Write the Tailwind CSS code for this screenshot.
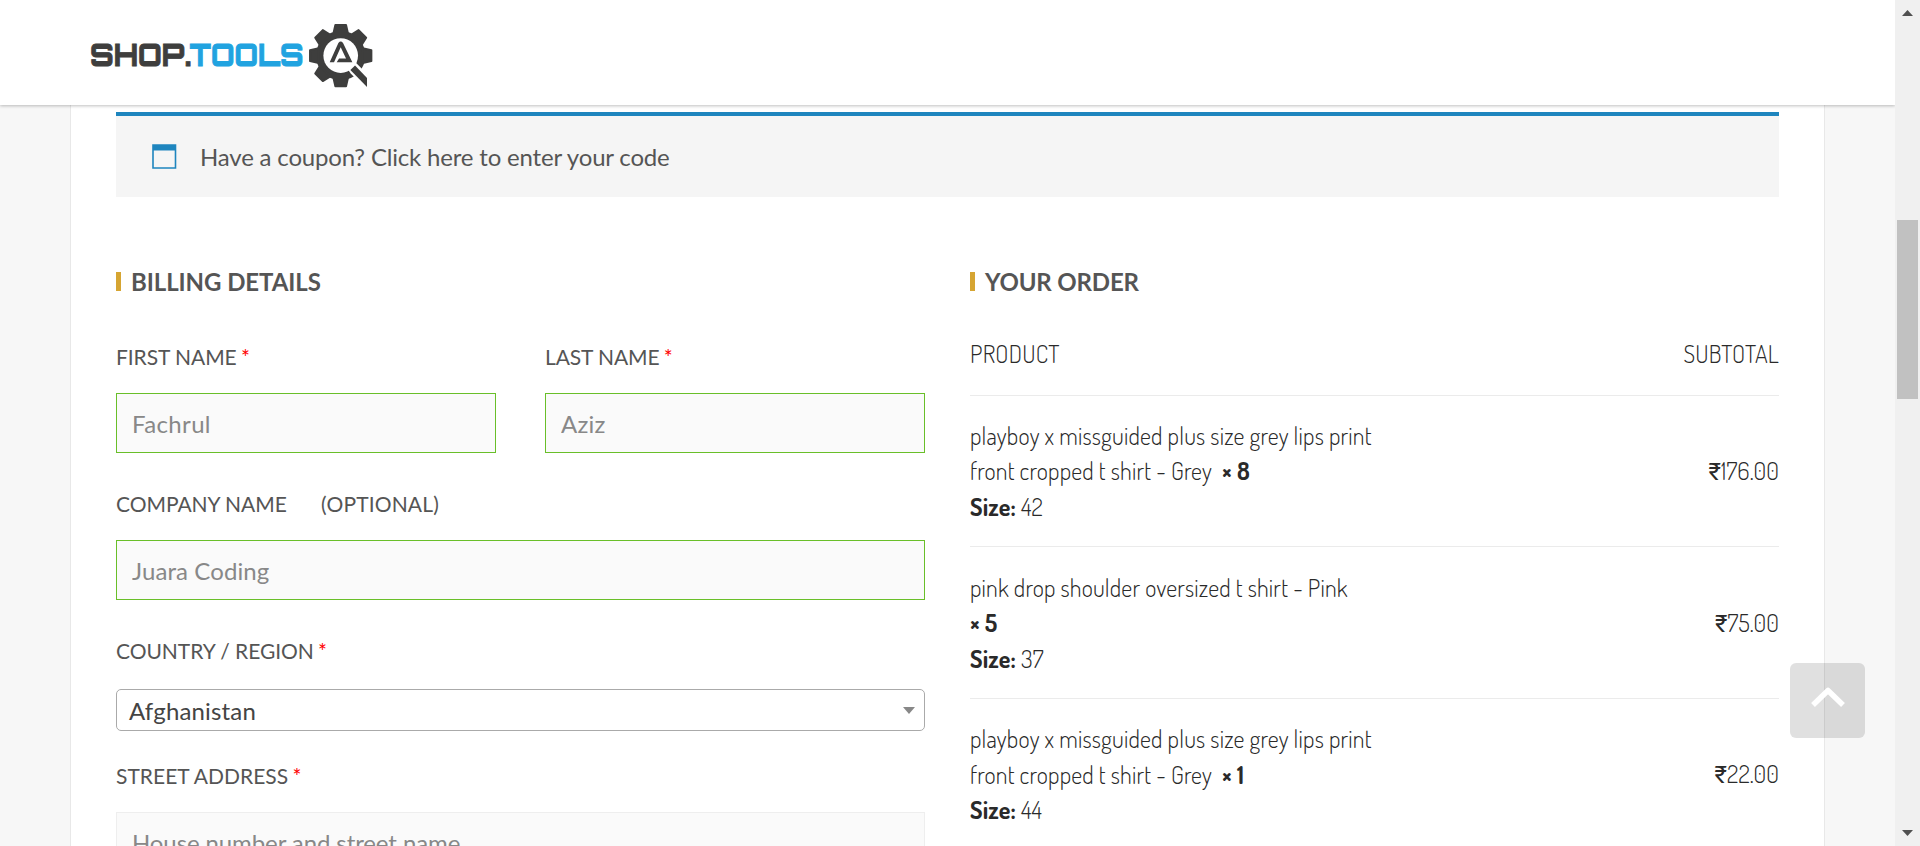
<!DOCTYPE html>
<html lang="en">
<head>
<meta charset="utf-8">
<title>Checkout – Shop Tools</title>
<script src="https://cdn.jsdelivr.net/npm/@tailwindcss/browser@4"></script>
</head>
<body class="relative flex h-[846px] w-[1920px] overflow-hidden bg-[#f7f7f7] font-['Lato',sans-serif] text-[24px] leading-[36px] text-[#555]">
<div class="flex h-full w-[1895px] flex-col">
  <header class="relative z-10 flex h-[105px] shrink-0 items-start bg-white pl-[90px] shadow-[0_1px_3px_rgba(0,0,0,0.25)]">
    <svg class="mt-[22px] block" width="284" height="68" viewBox="90 22 284 68" role="img" aria-label="Shop.Tools">
      <g font-family="Orbitron, Inter, sans-serif" font-weight="800" font-size="31.5" stroke-width=".8">
        <text x="90" y="65.700" textLength="101" lengthAdjust="spacingAndGlyphs" fill="#3e3e3d" stroke="#3e3e3d">SHOP.</text>
        <text x="189.500" y="65.700" textLength="114" lengthAdjust="spacingAndGlyphs" fill="#21a3e0" stroke="#21a3e0">TOOLS</text>
      </g>
      <g transform="translate(340.7 55.6) scale(.3333)">
        <g fill="#3e3e3d" stroke="#3e3e3d" stroke-width="6" stroke-linejoin="round">
          <circle r="71"/>
          <path id="tooth" d="M-22-66L-16-92H16L22-66Z"/>
          <use href="#tooth" transform="rotate(45)"/><use href="#tooth" transform="rotate(90)"/>
          <use href="#tooth" transform="rotate(180)"/><use href="#tooth" transform="rotate(225)"/>
          <use href="#tooth" transform="rotate(270)"/><use href="#tooth" transform="rotate(315)"/>
        </g>
        <circle r="52" fill="#fff"/>
        <path d="M22 42L44 20L96 72V112H88L30 54Z" fill="#fff"/>
        <path d="M29 43L43 30L79 67V94Z" fill="#3e3e3d"/>
        <path d="M-33 20L-7-38Q0-46 7-38L35 20H-12L-5 9H16L0-25L-20 20Z" fill="#3e3e3d"/>
      </g>
    </svg>
  </header>

  <main class="ml-[70px] h-[741px] w-[1755px] border-x border-[#e8e8e8] bg-white px-[45px] pt-[7px]">
    <div class="flex h-[85px] w-[1663px] items-center border-t-4 border-[#1e85be] bg-[#f5f5f5] pl-9">
      <svg width="25" height="25" viewBox="0 0 25 25" class="block"><path d="M1 1H23.5V24H1Z" fill="none" stroke="#1e85be" stroke-width="1.6"/><path d="M1 1H23.5V6.5H1Z" fill="#1e85be"/></svg>
      <span class="ml-[23px] tracking-[-0.18px]">Have a coupon? Click here to enter your code</span>
    </div>

    <div class="flex w-[1663px] gap-[45px] pt-[67px]">
      <form class="w-[809px] shrink-0">
        <h3 class="flex h-9 items-center font-bold tracking-[-0.07px]"><span class="mr-2.5 mb-px h-[19px] w-[5px] bg-[#d6a532]"></span>BILLING DETAILS</h3>
        <div class="flex gap-[49px] pt-[39px]">
          <div class="w-[380px]">
            <label class="block h-[54px] text-[21px] tracking-[-0.07px]">FIRST NAME <span class="-ml-px text-[#f00]">*</span></label>
            <input class="block h-[60px] w-full border border-[#69bf29] bg-[#fafafa] px-[15px] text-[#888] tracking-[0.35px]" value="Fachrul">
          </div>
          <div class="w-[380px]">
            <label class="block h-[54px] text-[21px] tracking-[-0.1px]">LAST NAME <span class="-ml-px text-[#f00]">*</span></label>
            <input class="block h-[60px] w-full border border-[#69bf29] bg-[#fafafa] px-[15px] text-[#888] tracking-[0.2px]" value="Aziz">
          </div>
        </div>
        <label class="mt-[33px] block h-[54px] text-[21px] tracking-[-0.05px]">COMPANY NAME <span class="ml-[29px] tracking-[0.15px]">(OPTIONAL)</span></label>
        <input class="block h-[60px] w-full border border-[#69bf29] bg-[#fafafa] px-[15px] text-[#888] tracking-[0.1px]" value="Juara Coding">
        <label class="mt-[33px] block h-[56px] text-[21px] tracking-[-0.05px]">COUNTRY / REGION <span class="-ml-px text-[#f00]">*</span></label>
        <div class="flex h-[42px] items-center justify-between rounded-[5px] border border-[#aaa] bg-white pl-3 pr-[9px] pt-px tracking-[0.15px] text-[#444]">Afghanistan
          <svg width="12" height="7" viewBox="0 0 12 7"><path d="M0 0H12L6 7Z" fill="#888"/></svg>
        </div>
        <label class="mt-[27px] block h-[54px] text-[21px] tracking-[0.02px]">STREET ADDRESS <span class="-ml-px text-[#f00]">*</span></label>
        <input class="block h-[60px] w-full border border-[#eee] bg-[#fafafa] px-[15px] tracking-[-0.1px] placeholder:text-[#888]" placeholder="House number and street name">
      </form>

      <section class="w-[809px]">
        <h3 class="flex h-9 items-center font-bold tracking-[-0.15px]"><span class="mr-2.5 mb-px h-[19px] w-[5px] bg-[#d6a532]"></span>YOUR ORDER</h3>
        <div class="font-['Dosis','Roboto_Condensed',sans-serif] font-light text-[#2a2a2a]">
          <div class="mt-[36px] flex h-[60px] justify-between border-b border-[#ebebeb] tracking-[0.2px]"><span>PRODUCT</span><span>SUBTOTAL</span></div>
          <div class="flex h-[151px] items-center justify-between border-b border-[#ebebeb]">
            <div class="leading-[35.5px] tracking-[0.18px]">playboy x missguided plus size grey lips print<br>front cropped t shirt - Grey&nbsp; <b class="font-bold">× 8</b><br><b class="font-bold">Size:</b> 42</div><span class="tracking-[0.1px]"><span class="font-['Roboto'] font-normal">₹</span>176.00</span>
          </div>
          <div class="flex h-[152px] items-center justify-between border-b border-[#ebebeb] pt-px">
            <div class="leading-[35.5px] tracking-[0.18px]">pink drop shoulder oversized t shirt - Pink<br><b class="font-bold">× 5</b><br><b class="font-bold">Size:</b> 37</div><span class="tracking-[0.1px]"><span class="font-['Roboto'] font-normal">₹</span>75.00</span>
          </div>
          <div class="flex h-[151px] items-center justify-between">
            <div class="leading-[35.5px] tracking-[0.18px]">playboy x missguided plus size grey lips print<br>front cropped t shirt - Grey&nbsp; <b class="font-bold">× 1</b><br><b class="font-bold">Size:</b> 44</div><span class="tracking-[0.1px]"><span class="font-['Roboto'] font-normal">₹</span>22.00</span>
          </div>
        </div>
      </section>
    </div>
  </main>
</div>

<aside class="relative z-10 flex h-full w-[25px] flex-col items-center bg-[#f0f0f0]">
  <svg width="25" height="220" viewBox="0 0 25 220" class="block shrink-0"><path d="M7 16L12.5 10L18 16Z" fill="#505050"/></svg>
  <div class="mr-px h-[179px] w-[21px] shrink-0 bg-[#c1c1c1]"></div>
  <svg width="25" height="447" viewBox="0 399 25 447" class="block shrink-0"><path d="M7 830L12.5 836L18 830Z" fill="#505050"/></svg>
</aside>

<button class="absolute left-[1790px] top-[663px] z-20 flex size-[75px] items-center justify-center rounded-[6px] bg-black/12" aria-label="Back to top">
  <svg width="36" height="22" viewBox="0 0 36 22" class="mb-[7px]"><path d="M3 19L18 4.500L33 19" fill="none" stroke="#fff" stroke-width="5.5" stroke-linejoin="round"/></svg>
</button>
</body>
</html>
